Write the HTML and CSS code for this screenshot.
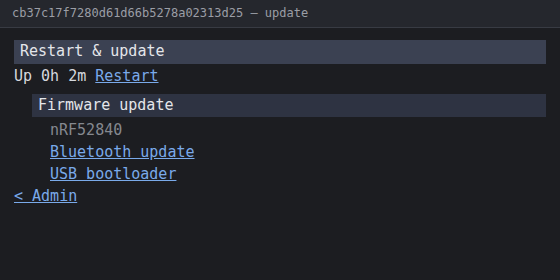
FILE: index.html
```html
<!DOCTYPE html>
<html>
<head>
<meta charset="utf-8">
<link rel="stylesheet" href="styles.css">
</head>
<body>
<div class="titlebar">cb37c17f7280d61d66b5278a02313d25 — update</div>
<main class="content">
  <div class="hdr hdr1">Restart &amp; update</div>
  <div class="row">Up 0h 2m <a href="#">Restart</a></div>
  <section class="sub">
    <div class="hdr hdr2">Firmware update</div>
    <div class="items">
      <div class="row muted">nRF52840</div>
      <div class="row"><a href="#">Bluetooth update</a></div>
      <div class="row"><a href="#">USB bootloader</a></div>
    </div>
  </section>
  <div class="row"><a href="#">&lt; Admin</a></div>
</main>
</body>
</html>
```
FILE: styles.css
```css
html, body {
  margin: 0;
  padding: 0;
  background: #1c1d21;
  height: 100%;
}
body {
  font-family: "DejaVu Sans Mono", monospace;
  color: #d6d8de;
}
.titlebar {
  height: 27px;
  border-bottom: 1px solid #383b43;
  background: #25272d;
  color: #9b9ea6;
  font-size: 12px;
  line-height: 27px;
  padding-left: 12px;
}
.content {
  padding: 12px 14px 0 14px;
  font-size: 15px;
  line-height: 22px;
}
.hdr {
  padding: 0 6px 2px 6px;
  color: #e4e6ea;
}
.hdr1 {
  background: #3b4152;
}
.row {
  padding-top: 1px;
  margin-bottom: -1px;
}
.sub {
  margin: 8px 0 0 18px;
}
.hdr2 {
  background: #2e3342;
  padding: 0 6px 1px 6px;
}
.items {
  padding-top: 1px;
  padding-left: 18px;
}
.muted {
  color: #85888f;
}
a {
  color: #7aaaea;
  text-decoration: underline;
}
```
